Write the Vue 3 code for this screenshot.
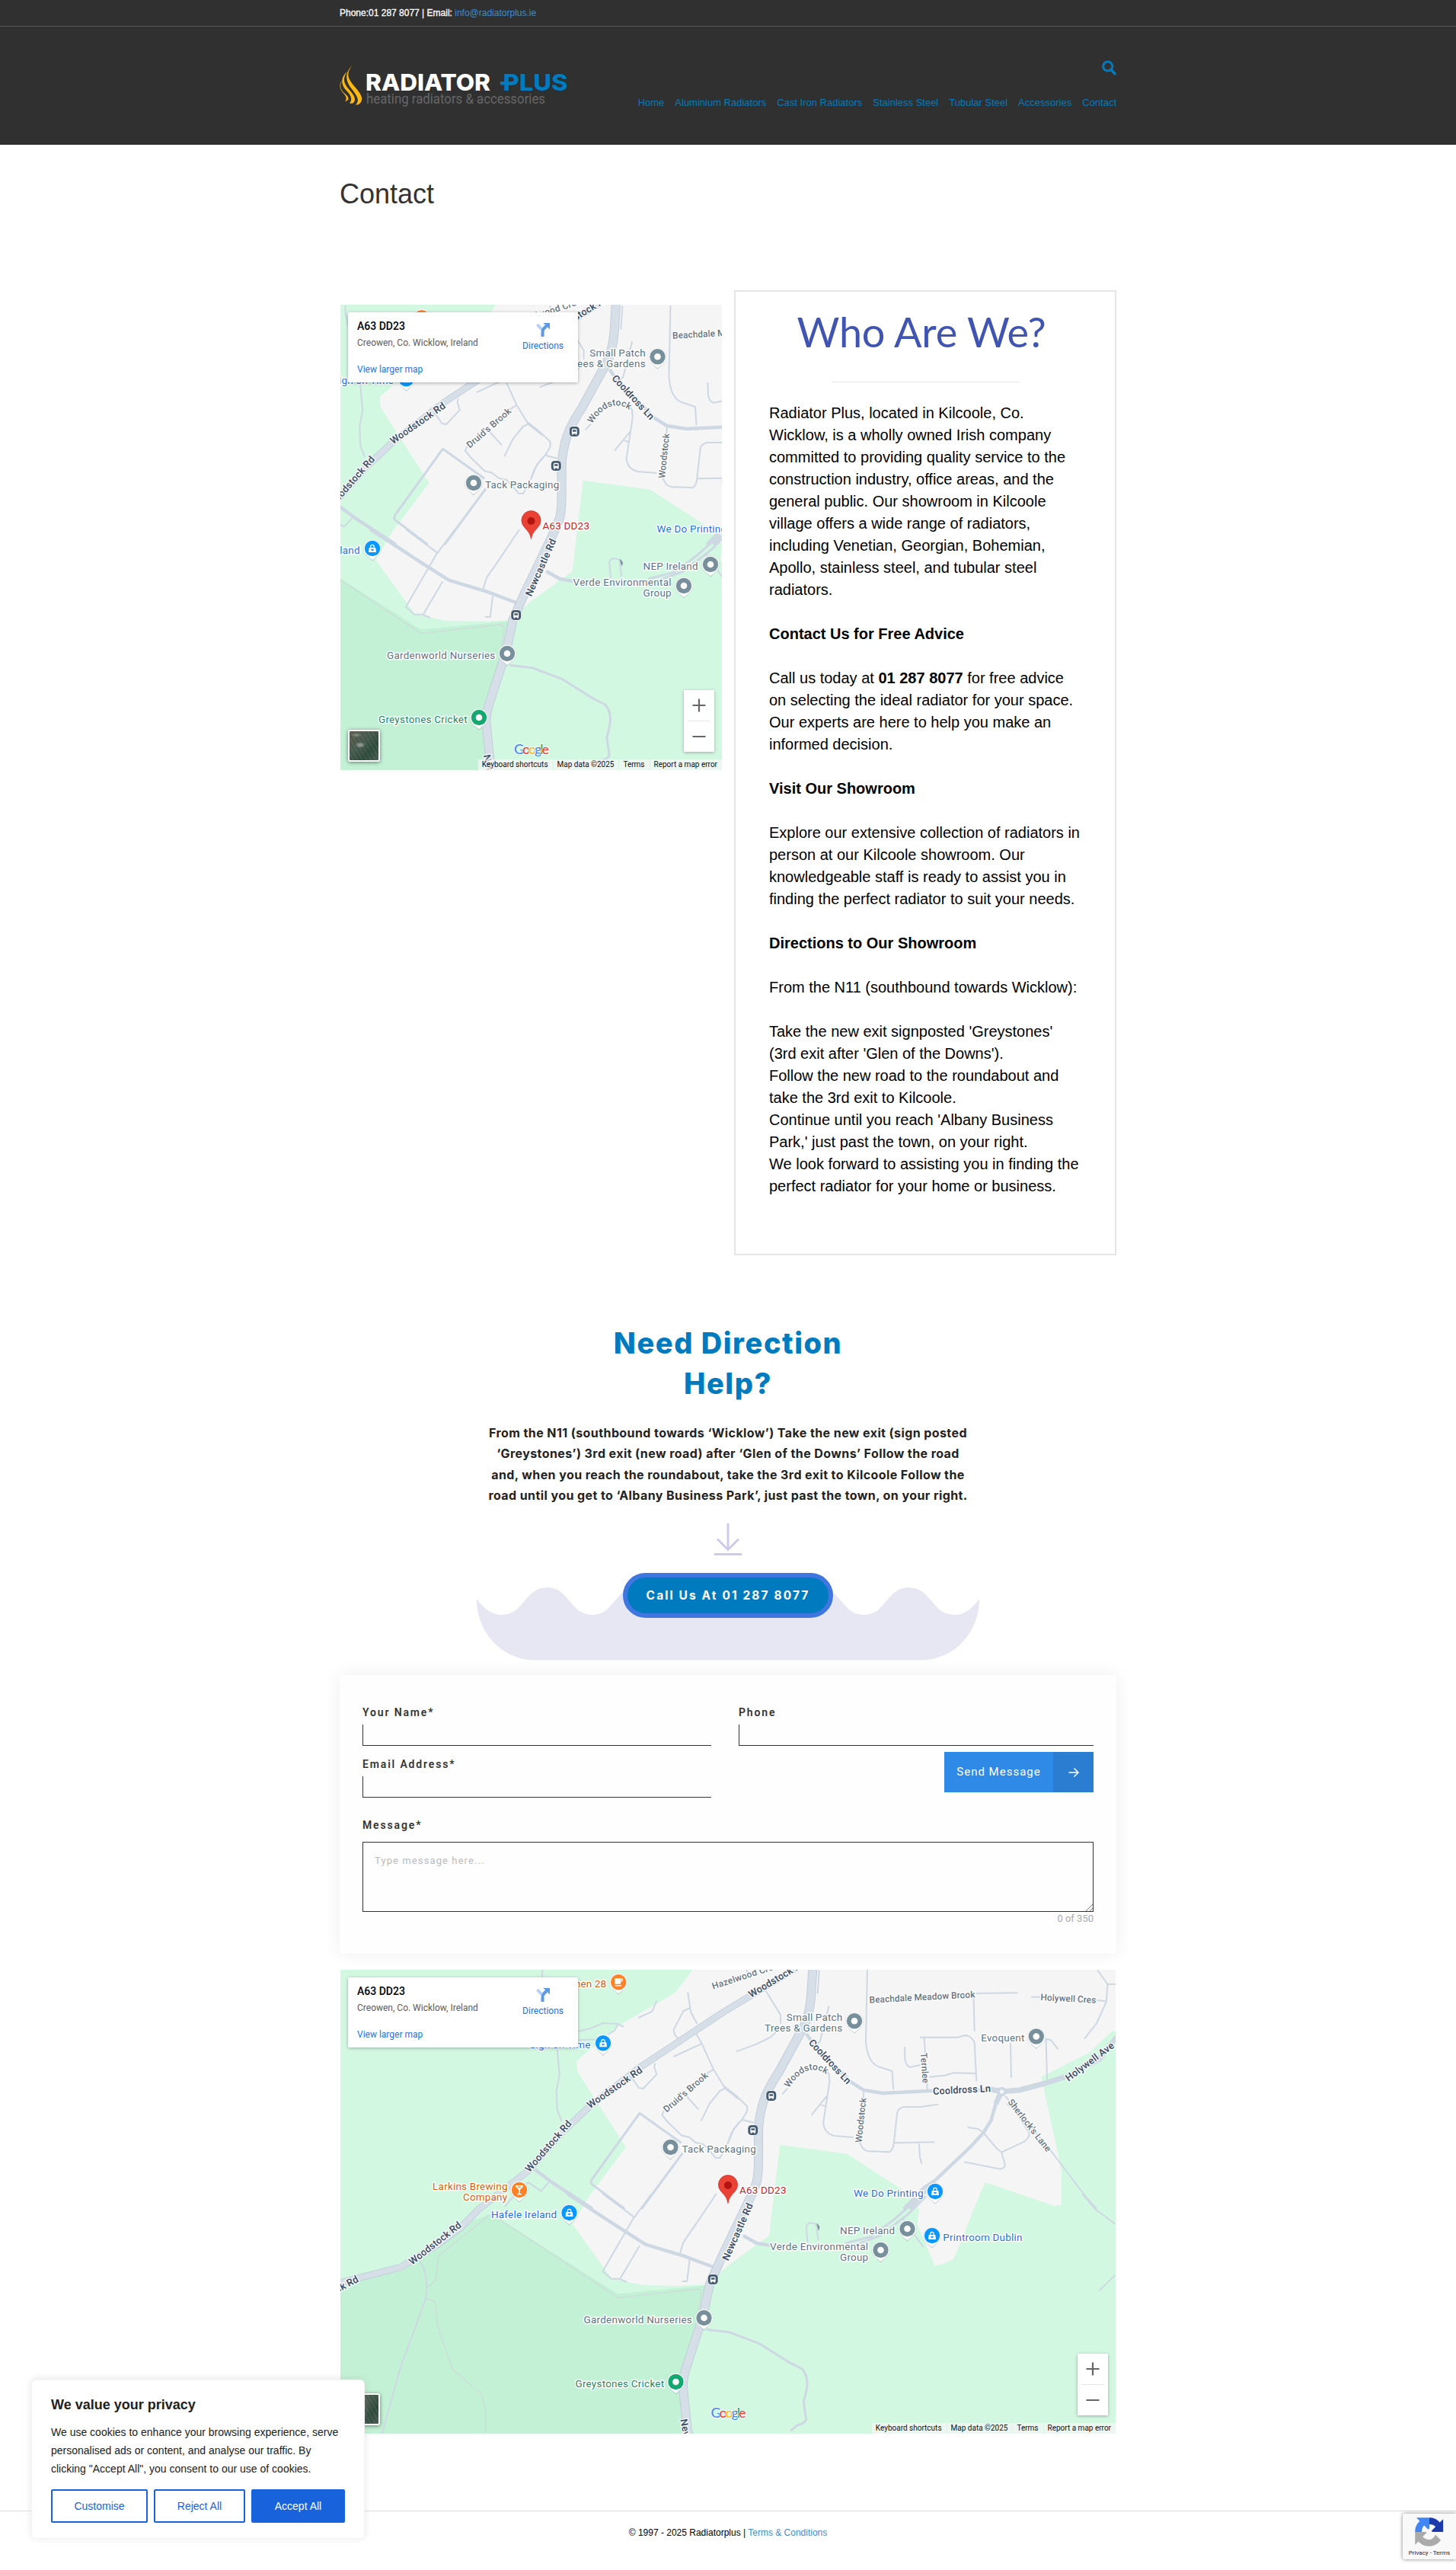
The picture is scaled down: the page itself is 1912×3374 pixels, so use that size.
<script setup>
const nav = ['Home', 'Aluminium Radiators', 'Cast Iron Radiators', 'Stainless Steel', 'Tubular Steel', 'Accessories', 'Contact']

// Map coordinates are pixels from the centre of the map view.
const places = [
  { t: 'Small Patch', x: 77.5, y: -237.5, w: 73.4, c: 'grey' },
  { t: 'Trees & Gardens', x: 48.8, y: -223.5, w: 102, c: 'grey' },
  { t: 'Tack Packaging', x: -59.8, y: -64.5, w: 97.3, c: 'grey' },
  { t: 'A63 DD23', x: 15.6, y: -10.5, w: 61.6, c: 'red' },
  { t: 'We Do Printing', x: 165.7, y: -6.5, w: 91.6, c: 'blue' },
  { t: 'Evoquent', x: 333, y: -210.5, w: 57, c: 'grey' },
  { t: 'NEP Ireland', x: 147.8, y: 42.5, w: 72, c: 'grey' },
  { t: 'Verde Environmental', x: 55.8, y: 63.5, w: 129, c: 'grey' },
  { t: 'Group', x: 147.8, y: 77.5, w: 37, c: 'grey' },
  { t: 'Gardenworld Nurseries', x: -188.8, y: 159.5, w: 142.3, c: 'grey' },
  { t: 'Greystones Cricket', x: -199.8, y: 243.5, w: 116.6, c: 'green' },
  { t: 'Hafele Ireland', x: -310.4, y: 21, w: 86.2, c: 'blue' },
  { t: 'Printroom Dublin', x: 283, y: 51, w: 104.2, c: 'blue' },
  { t: 'Larkins Brewing', x: -387.2, y: -15.5, w: 98.4, c: 'orange' },
  { t: 'Company', x: -347.3, y: -1.5, w: 58.1, c: 'orange' },
  { t: 'Kitchen 28', x: -224, y: -281.5, w: 64.7, c: 'orange' },
  { t: 'Sign on Time', x: -260, y: -201.5, w: 80, c: 'blue' },
]
const streets = [
  { t: 'Woodstock Rd', x: -149, y: -150, r: -35, w: 85, b: 1 },
  { t: 'Woodstock Rd', x: -236, y: -73, r: -49, w: 85, b: 1 },
  { t: 'Woodstock Rd', x: -384.7, y: 54.5, r: -38, w: 83, b: 1 },
  { t: 'Woodstock Rd', x: -523, y: 120, r: -28, w: 83, b: 1 },
  { t: 'Woodstock Rd', x: 64, y: -293, r: -31, w: 84, b: 1 },
  { t: 'Hazelwood Cres', x: 22, y: -297, r: -18, w: 90 },
  { t: 'Beachdale Meadow Brook', x: 255, y: -269, r: -3, w: 139 },
  { t: 'Holywell Cres', x: 447, y: -267, r: 3, w: 73 },
  { t: 'Cooldross Ln', x: 134, y: -184, r: 47, w: 75, b: 1 },
  { t: 'Cooldross Ln', x: 307, y: -147, r: -3, w: 76, b: 1 },
  { t: 'Holywell Ave', x: 475, y: -184, r: -37, w: 76, b: 1 },
  { t: 'Woodstock', x: 174, y: -107, r: -84, w: 59 },
  { t: 'Ternlee', x: 258.7, y: -175.5, r: 86, w: 40 },
  { t: "Sherlock's Lane", x: 396.3, y: -100.5, r: 52, w: 84 },
  { t: "Druid's Brook", x: -56, y: -144, r: -41, w: 73 },
  { t: 'Newcastle Rd', x: 12.5, y: 39.5, r: -66, w: 81, b: 1 },
  { t: 'Newcastle Rd', x: -50, y: 325, r: 78, w: 81, b: 1 },
]
const pins = [
  { x: 166, y: -237.3, k: 'grey' },
  { x: -75.5, y: -71.5, k: 'grey' },
  { x: 404.8, y: -217, k: 'grey' },
  { x: 235.5, y: 35.5, k: 'grey' },
  { x: 200.5, y: 63.5, k: 'grey' },
  { x: -31.5, y: 152.5, k: 'grey' },
  { x: -68.5, y: 236.5, k: 'green' },
  { x: -164, y: -208.2, k: 'blue' },
  { x: -208.5, y: 14.5, k: 'blue' },
  { x: 272, y: -13.5, k: 'blue' },
  { x: 268, y: 44.5, k: 'blue' },
  { x: -143.8, y: -288.3, k: 'cup' },
  { x: -274, y: -15.5, k: 'glass' },
]
const stops = [[56.8, -139], [32.8, -94], [-19.8, 102]]

const about = [
  { b: 0, t: 'Radiator Plus, located in Kilcoole, Co.\nWicklow, is a wholly owned Irish company\ncommitted to providing quality service to the\nconstruction industry, office areas, and the\ngeneral public. Our showroom in Kilcoole\nvillage offers a wide range of radiators,\nincluding Venetian, Georgian, Bohemian,\nApollo, stainless steel, and tubular steel\nradiators.' },
  { b: 1, t: 'Contact Us for Free Advice' },
  { call: 1 },
  { b: 1, t: 'Visit Our Showroom' },
  { b: 0, t: 'Explore our extensive collection of radiators in\nperson at our Kilcoole showroom. Our\nknowledgeable staff is ready to assist you in\nfinding the perfect radiator to suit your needs.' },
  { b: 1, t: 'Directions to Our Showroom' },
  { b: 0, t: 'From the N11 (southbound towards Wicklow):' },
  { b: 0, t: "Take the new exit signposted 'Greystones'\n(3rd exit after 'Glen of the Downs').\nFollow the new road to the roundabout and\ntake the 3rd exit to Kilcoole.\nContinue until you reach 'Albany Business\nPark,' just past the town, on your right.\nWe look forward to assisting you in finding the\nperfect radiator for your home or business." },
]
const attribution = ['Keyboard shortcuts', 'Map data ©2025', 'Terms', 'Report a map error']
</script>

<template>
  <div class="page">
    <header class="head">
      <div class="topbar"><div class="wrap"><span>Phone:01 287 8077 | Email: </span><a>info@radiatorplus.ie</a></div></div>
      <div class="wrap brandrow">
        <svg class="logo" width="304" height="60" viewBox="0 0 304 60">
          <g fill="#fdb913">
            <path d="M15.500 4C6 16 11 22 19 32C27 41 30 47 27 52C25 55 22 56 20 55.500C26 50 22 44 15 35C7 25 5 14 15.500 4Z" />
            <path d="M9 12C2 22 5 28 11 35C19 44 21 49 17 53C16 54 13.500 54 12 53.500C17 48 13 42 7 36C0 28 1 18 9 12Z" />
            <path d="M3 23C-2 30 0 36 6 41C12 46 12 49 6 51.500C10 46 6 43 2 38C-2 32-1 27 3 23Z" />
          </g>
          <text x="33" y="37" textLength="164" lengthAdjust="spacingAndGlyphs" class="l1">RADIATOR</text>
          <text x="213.500" y="37" textLength="85" lengthAdjust="spacingAndGlyphs" class="l2">PLUS</text>
          <rect x="210" y="25" width="18" height="4.500" fill="#007bbf" />
          <text x="34" y="53.500" textLength="235" lengthAdjust="spacingAndGlyphs" class="l3">heating radiators &amp; accessories</text>
        </svg>
        <div class="navside">
          <svg width="19" height="20" viewBox="0 0 19 20"><circle cx="7.700" cy="8" r="6.100" fill="none" stroke="#007bbf" stroke-width="3" /><path d="M12 12.500L17 17.800" stroke="#007bbf" stroke-width="3.600" stroke-linecap="round" /></svg>
          <nav><a v-for="n in nav" :key="n">{{ n }}</a></nav>
        </div>
      </div>
    </header>

    <main class="wrap">
      <h1>Contact</h1>

      <div class="cols">
        <div class="map small">
          <svg width="501" height="611" viewBox="-250.5 -305.5 501 611">
            <g id="kilcoole">
              <rect x="-510" y="-307" width="1022" height="616" fill="#d3f8e2" />
              <path fill="#c3f1d5" d="M-144.600 121L-310.400 16L-317 18L-357 33L-433 88L-512 112V309H-51L-61 234L-36 134L-28.600 110Z" />
              <path fill="#f5f5f5" d="M-44.400-307L-69.700-274L-140.700-233L-199-184.500L-197.500-170.500L-134-71.500L-182.500-7L-204 29.500L-152.500 101L-111 109.500L-71 110.500L-27.500 109L-1 84.500L54 44.500L61-15.500L68.300-74.800L156.400-62.800L227-17L251 9.500L248.600 29.500L271.800 84.500L283 81L296.300 75.500L331-10.500L337.800-25.500L428.400 5.500L438 4.500V-40.500L415-147L411.500-164L474-195.500L504.500-224H512V-307Z" />
              <g class="minor">
                <g transform="translate(-516 -320.5) scale(.33807 .33333)">
                  <path d="M805 48V78L862 355L872 460L860 525L863 600L880 645M945 290L990 280L1040 258L1100 261L1122 273M1100 261L1085 288L1060 303M945 325L1010 322M1178 237L1232 212L1249 170M1370 137L1382 215L1407 262M1378 198L1352 212L1315 285L1320 305L1335 322M1315 390L1422 340M1403 300L1425 340L1470 440L1515 515L1568 558M1470 440L1440 460M1150 470L1180 513L1197 516L1249 460L1240 430L1243 415M1278 603L1270 620L1290 645L1345 700L1375 707L1400 728L1430 735L1455 760L1478 789H1495L1520 745L1540 690L1568 650M1515 515L1495 525L1455 575L1422 643M1360 540L1412 598M660 980L680 955L750 885L800 920L835 880" />
                  <path class="m3" d="M1345 730L1183 613L1000 870Q990 885 998 893L1125 990M1350 770L1190 990" />
                  <path class="m5" d="M770 830L835 880L1000 990" />
                </g>
                <g transform="translate(-6 -320.5) scale(.33807 .33333)">
                  <path d="M92 48V60M163 128L222 225V260M50 370L130 340L180 315L215 285M372 50L366 142M410 190L385 290L375 330L360 345M0 505L45 540L92 585V605L72 638L40 675L18 730M72 638L118 650M228 538L250 515M395 440L410 460L412 490L388 650Q390 690 430 702L505 708M402 545L342 620M375 577L398 587M559 48L553 330Q560 420 610 432L655 447L660 520M545 530L540 600L520 710L535 740Q545 765 575 763L645 766Q660 755 662 730L675 610Q678 595 700 588H765L835 578M662 730L820 727M760 733L763 785L770 812M704 352L705 400Q710 430 728 431L765 423M763 314H910L940 306Q965 310 975 335L983 487M780 314L792 520M800 470L860 464L895 454L980 456M980 141L1143 139M972 160L975 290M1195 155H1230M1450 168L1485 172M1452 48L1492 105L1487 175L1450 258L1402 320M1492 105H1524M1115 335L1118 473M1253 320L1257 480M1253 320L1272 325L1300 361M1100 575L1130 600L1188 690Q1190 708 1170 724L1080 767L1060 750L1010 690M1080 767L1094 815Q1090 835 1070 832L935 805M948 668L990 675L1010 690M1095 545L1130 590L1275 765L1410 945L1450 990" />
                  <path class="m5" d="M322 300L350 340L495 490L545 522L620 534L800 525L1080 520M1078 530L1058 575L1040 640L1010 690L960 745L825 875" />
                  <path class="m4" d="M825 875L780 905L700 990M825 875L725 990" />
                  <path class="m7" d="M1035 518L1080 528L1150 522L1250 495L1340 465L1460 400L1530 310M1080 528L1058 575" />
                </g>
                <circle cx="359.500" cy="-144.500" r="4.500" fill="#f5f5f5" stroke-width="3.500" />
                <g transform="translate(-516 -10.5) scale(.66313 .33333)">
                  <path d="M530 0L592 92M627 0L590 100L530 305L547 335H562L578 348M565 333L603 205M755 0L718 110L690 190L683 235M702 262L697 345H687M936 193L933 130Q935 112 945 115L953 120L957 185M1125 100L1165 210M1480 0L1505 60L1545 120M1545 320L1513 382M168 265Q185 310 180 410L160 520L130 680L105 860L93 945" />
                  <path class="m5" d="M460 0L560 130L615 200L690 245L748 288M808 165L835 195L860 203L900 205" />
                  <path class="m3" d="M735 535L780 545L840 590L900 665L925 690Q938 720 934 770L928 820L933 890Q930 905 915 912L902 935M1010 195L1060 170L1105 105L1165 0M1025 205L1080 165L1135 80L1170 10" />
                  <path class="trail" d="M325 100L560 410L718 375Q728 380 724 400L720 460M305 85L205 245L200 340L182 370M180 412L198 425L203 520L232 690L290 790L298 850V945" />
                </g>
              </g>
              <path class="edge" d="M90-307L-6-249L-117-175.500L-183-124L-218.500-90.500L-262.500-40.500L-327 9.500L-350 33L-384 58L-430 86L-512 107" stroke-width="9" />
              <path class="road" d="M90-307L-6-249L-117-175.500L-183-124L-218.500-90.500L-262.500-40.500L-327 9.500L-350 33L-384 58L-430 86L-512 107" stroke-width="7.600" />
              <path class="edge" d="M111.500-308L109-269Q107-245 99-229L66-169Q48-142 44-122Q40-105 40-92V-52Q40-35 37.500-25.500L31-9L-7.500 71L-24 108L-31 141L-37.500 164.500L-55 218Q-60 235-59 244.500L-53.500 298L-51 309" stroke-width="12" />
              <path class="road" d="M111.500-308L109-269Q107-245 99-229L66-169Q48-142 44-122Q40-105 40-92V-52Q40-35 37.500-25.500L31-9L-7.500 71L-24 108L-31 141L-37.500 164.500L-55 218Q-60 235-59 244.500L-53.500 298L-51 309" stroke-width="10.400" />
              <path d="M117 29L120 33L119 37Z" fill="#78909c" stroke="#78909c" />

              <text v-for="(s, i) in streets" :key="'s' + i" :class="['street', { bold: s.b }]" :transform="`translate(${s.x} ${s.y}) rotate(${s.r})`" y="4.500" text-anchor="middle" :textLength="s.w">{{ s.t }}</text>
              <path id="bend" d="M80-149Q104-188 134-164L142-157" fill="none" />
              <text class="street" textLength="60"><textPath href="#bend">Woodstock</textPath></text>

              <g v-for="(b, i) in stops" :key="'b' + i" :transform="`translate(${b[0]} ${b[1]})`">
                <circle r="7.600" fill="#fff" /><rect x="-6.500" y="-6.500" width="13" height="13" rx="4.500" fill="#455a70" />
                <path d="M-3.500 3V-2Q-3.500-3.800-1.700-3.800H1.700Q3.500-3.800 3.500-2V3ZM-2.300-2.200V.2H2.300V-2.200ZM-3 3H-1.500V4.300H-3ZM1.500 3H3V4.300H1.500Z" fill="#fff" fill-rule="evenodd" />
              </g>
              <g v-for="(p, i) in pins" :key="'p' + i" :transform="`translate(${p.x} ${p.y})`">
                <path d="M0 16.500L-7.500 9.500A11.800 11.800 0 1 1 7.500 9.500Z" fill="#90a4ae" opacity=".55" />
                <path d="M0 15.300L-7.500 9A11.600 11.600 0 1 1 7.500 9Z" fill="#fff" />
                <circle r="10.200" :class="'pin-' + p.k" />
                <circle v-if="p.k === 'grey' || p.k === 'green'" r="4.300" fill="#fff" />
                <path v-else-if="p.k === 'blue'" d="M-4.300-1H-2.800V-2.500A2.800 2.800 0 0 1 2.800-2.500V-1H4.300L5 5H-5ZM-1.600-1H1.600V-2.500A1.600 1.600 0 0 0-1.600-2.500ZM-2 1A2 2 0 0 0 2 1Z" fill="#fff" fill-rule="evenodd" />
                <path v-else-if="p.k === 'cup'" d="M-5-5H5.500V-1H3V1Q3 2.500 1.500 2.500H-3.500Q-5 2.500-5 1ZM3-3.800V-2H4.300V-3.800ZM-5 4H4V5.300H-5Z" fill="#fff" fill-rule="evenodd" />
                <path v-else d="M-5-6H5V-4.500L.8 0V5H3V6.300H-3V5H-.8V0L-5-4.500ZM-2.500-4.500L-1.300-3H1.300L2.500-4.500Z" fill="#fff" fill-rule="evenodd" />
              </g>
              <text v-for="p in places" :key="p.t" :x="p.x - 0.7" :y="p.y" :textLength="p.w" :class="['place', 't-' + p.c]">{{ p.t }}</text>
              <path d="M0 2.200C-1.500-6-4.500-8-9-13.500A12.600 12.600 0 1 1 9-13.500C4.500-8 1.500-6 0 2.200Z" fill="#ea4335" stroke="#c5221f" stroke-width=".6" />
              <circle cy="-21.500" r="5" fill="#b31412" />
            </g>
            <text x="-22.500" y="284" textLength="46" class="google"><tspan fill="#4285f4">G</tspan><tspan fill="#ea4335">o</tspan><tspan fill="#fbbc04">o</tspan><tspan fill="#4285f4">g</tspan><tspan fill="#34a853">l</tspan><tspan fill="#ea4335">e</tspan></text>
          </svg>
          <div class="mcard">
            <div><b>A63 DD23</b><span>Creowen, Co. Wicklow, Ireland</span><a>View larger map</a></div>
            <div class="dir"><svg width="18" height="18" viewBox="0 0 18 18"><path d="M1.500 2L8.500 9.500" stroke="#b3d1f8" stroke-width="4" /><path d="M8.500 18V12Q8.500 9 10.500 7L14 3.500" fill="none" stroke="#5c9ae8" stroke-width="4" /><path d="M9.500 0H18V8.500Z" fill="#5c9ae8" /></svg><a>Directions</a></div>
          </div>
          <div class="zoomer"><svg width="40" height="81" viewBox="0 0 40 81"><path d="M11.500 20H28.500M20 11.500V28.500M11.500 61H28.500" stroke="#666" stroke-width="2.200" /><path d="M5 40.500H35" stroke="#e6e6e6" /></svg></div>
          <div class="thumb"></div>
          <div class="attr"><span v-for="a in attribution" :key="a">{{ a }}</span></div>
        </div>

        <section class="who">
          <h2>Who Are We?</h2>
          <hr />
          <template v-for="(p, i) in about" :key="i">
            <p v-if="p.call">Call us today at <b>01 287 8077</b> for free advice<br />on selecting the ideal radiator for your space.<br />Our experts are here to help you make an<br />informed decision.</p>
            <p v-else :class="{ strong: p.b }">{{ p.t }}</p>
          </template>
        </section>
      </div>

      <section class="help">
        <h2>Need Direction<br />Help?</h2>
        <p><span>From the N11 (southbound towards ‘Wicklow’) Take the new exit (sign posted</span><span>‘Greystones’) 3rd exit (new road) after ‘Glen of the Downs’ Follow the road</span><span>and, when you reach the roundabout, take the 3rd exit to Kilcoole Follow the</span><span>road until you get to ‘Albany Business Park’, just past the town, on your right.</span></p>
        <svg class="arrow" width="36" height="43" viewBox="0 0 36 43"><path d="M18 0V34M4 20.500L18 34.500L32 20.500" fill="none" stroke="#cdc9e8" stroke-width="2.800" /><path d="M0 40.500H36" stroke="#cdc9e8" stroke-width="3" /></svg>
        <div class="wave">
          <svg width="660" height="96" viewBox="0 0 660 96"><path fill="#e7e7f3" d="M0 15C10 28 19 36 33 36C62 36 63 0 92.500 0C122 0 122 36 152 36C181 36 181 0 211 0C240 0 240 36 270 36C300 36 300 0 330 0C360 0 360 36 390 36C420 36 420 0 449 0C479 0 479 36 508 36C538 36 538 0 567.500 0C597 0 598 36 627 36C641 36 650 28 660 15C660 60 626 95.500 583 95.500H77C34 95.500 0 60 0 15Z" /></svg>
          <a class="call">Call Us At 01 287 8077</a>
        </div>
      </section>

      <form class="form">
        <div class="row">
          <div class="f1"><label>Your Name*</label><div class="input"></div><label class="second">Email Address*</label><div class="input"></div></div>
          <div class="f2"><label>Phone</label><div class="input"></div>
            <div class="send"><span>Send Message</span><i><svg width="14" height="14" viewBox="0 0 14 14"><path d="M.5 7H13M7.500 1.500L13 7L7.500 12.500" fill="none" stroke="#fff" stroke-width="1.500" /></svg></i></div>
          </div>
        </div>
        <label class="msg">Message*</label>
        <div class="area">Type message here...<svg width="9" height="9" viewBox="0 0 9 9"><path d="M0 9L9 0M5 9L9 5" stroke="#666" stroke-width=".9" /></svg></div>
        <div class="count">0 of 350</div>
      </form>

      <div class="map wide">
        <svg width="1018" height="609" viewBox="-509 -304.5 1018 609">
          <use href="#kilcoole" />
          <text x="-22.500" y="283" textLength="46" class="google"><tspan fill="#4285f4">G</tspan><tspan fill="#ea4335">o</tspan><tspan fill="#fbbc04">o</tspan><tspan fill="#4285f4">g</tspan><tspan fill="#34a853">l</tspan><tspan fill="#ea4335">e</tspan></text>
        </svg>
        <div class="mcard">
          <div><b>A63 DD23</b><span>Creowen, Co. Wicklow, Ireland</span><a>View larger map</a></div>
          <div class="dir"><svg width="18" height="18" viewBox="0 0 18 18"><path d="M1.500 2L8.500 9.500" stroke="#b3d1f8" stroke-width="4" /><path d="M8.500 18V12Q8.500 9 10.500 7L14 3.500" fill="none" stroke="#5c9ae8" stroke-width="4" /><path d="M9.500 0H18V8.500Z" fill="#5c9ae8" /></svg><a>Directions</a></div>
        </div>
        <div class="zoomer"><svg width="40" height="81" viewBox="0 0 40 81"><path d="M11.500 20H28.500M20 11.500V28.500M11.500 61H28.500" stroke="#666" stroke-width="2.200" /><path d="M5 40.500H35" stroke="#e6e6e6" /></svg></div>
        <div class="thumb"></div>
        <div class="attr"><span v-for="a in attribution" :key="a">{{ a }}</span></div>
      </div>
    </main>

    <footer>© 1997 - 2025 Radiatorplus | <a>Terms &amp; Conditions</a></footer>

    <div class="cookie">
      <h3>We value your privacy</h3>
      <p>We use cookies to enhance your browsing experience, serve personalised ads or content, and analyse our traffic. By clicking "Accept All", you consent to our use of cookies.</p>
      <div class="btns"><span class="b1">Customise</span><span class="b2">Reject All</span><span class="b3">Accept All</span></div>
    </div>

    <div class="captcha">
      <svg width="40" height="40" viewBox="0 0 64 64">
        <path fill="#1c3aa9" d="M61 31.900V5L54 12C48 5 40 2 32 2V16C38 16 42 18 45 21L37 29C37 31 38 31.900 39 31.900Z" />
        <path fill="#4285f4" d="M32 2H5L12 9.500C5 15 2 23 2 31.900H16C16 26 18 21 21 18.500L29 26.500C31 26.500 32 25.500 32 24Z" />
        <path fill="#ababab" d="M2 31.900V59L9 52C15 59 23 62 31.500 62C42 62 50 57 56 49L45 38C41 45 37 48 31.500 48C25 48 21 45 18 42L26 34C26 32.500 25 31.900 24 31.900Z" />
      </svg>
      <span>Privacy - Terms</span>
    </div>
  </div>
</template>

<style>
body { margin: 0; background: #fff; }
</style>

<style scoped>
.page { position: relative; height: 3374px; overflow: hidden; font-family: "Liberation Sans", Arial, sans-serif; color: #000; }
.wrap { width: 1020px; margin: 0 auto; }
.head { height: 190px; background: #303030; box-sizing: border-box; border-bottom: 1px solid #222; }
.topbar { height: 34px; border-bottom: 1px solid #555; color: #fff; font-size: 12px; line-height: 35px; }
.topbar span { -webkit-text-stroke: .3px #fff; white-space: pre; }
.topbar a { color: #428bca; }
.brandrow { display: flex; justify-content: space-between; }
.logo { margin-top: 47px; margin-left: 1px; overflow: visible; }
.l1, .l2 { font: 800 30px Inter, sans-serif; fill: #fff; }
.l2 { fill: #007bbf; paint-order: stroke; stroke: #1c2b33; stroke-width: 1.5px; }
.l3 { font: 400 17.500px Roboto, sans-serif; fill: #676767; }
.navside { display: flex; flex-direction: column; align-items: flex-end; padding-top: 44px; }
nav { display: flex; gap: 14px; margin-top: 28px; font-size: 13px; line-height: 15px; color: #007bbf; }
h1 { margin: 45px 0 0; font-size: 36px; line-height: 40px; font-weight: 400; color: #333; }
.cols { display: flex; justify-content: space-between; align-items: flex-start; margin-top: 106px; }
.map { position: relative; overflow: hidden; font-family: Roboto, sans-serif; margin-left: 1px; }
.map > svg { display: block; }
.small { width: 501px; height: 611px; margin-top: 19px; }
.wide { width: 1018px; height: 609px; margin-top: 21px; }
.minor { fill: none; stroke: #cdd8e3; stroke-linejoin: round; }
.minor path { stroke-width: 2px; vector-effect: non-scaling-stroke; }
.minor .m3 { stroke-width: 3px; }
.minor .m4 { stroke-width: 4px; }
.minor .m5 { stroke-width: 4.500px; }
.minor .m7 { stroke-width: 7px; }
.minor .trail { stroke: #cddcd8; stroke-width: 1.300px; }
.edge { fill: none; stroke: #bcc8d6; stroke-linejoin: round; }
.road { fill: none; stroke: #d6dfe8; stroke-linejoin: round; }
.street { font: 500 12px Roboto, sans-serif; fill: #66727e; paint-order: stroke; stroke: #fff; stroke-width: 2.500px; stroke-linejoin: round; }
.street.bold { font-size: 13px; fill: #40506a; font-weight: 600; }
.place { font: 400 13.500px Roboto, sans-serif; paint-order: stroke; stroke: #fff; stroke-width: 3px; stroke-linejoin: round; }
.t-grey { fill: #5b7383; }
.t-red { fill: #c5221f; }
.t-blue { fill: #1a73e8; }
.t-green { fill: #188a5f; }
.t-orange { fill: #d65f0b; }
.pin-grey { fill: #78909c; }
.pin-green { fill: #14a870; }
.pin-blue { fill: #0a98ff; }
.pin-cup, .pin-glass { fill: #ff8126; }
.google { font: 500 18px Lato, sans-serif; paint-order: stroke; stroke: #fff; stroke-width: 1.500px; }
.mcard { position: absolute; left: 10px; top: 10px; width: 302px; height: 92px; box-sizing: border-box; padding: 9px 19px 0 12px; background: #fff; border-radius: 2px; box-shadow: 0 1px 4px rgba(0, 0, 0, .3); display: flex; justify-content: space-between; font-size: 12px; }
.mcard b { display: block; font-size: 14px; font-weight: 500; line-height: 19px; }
.mcard span { display: block; color: #5b5b5b; line-height: 16px; margin-top: 4px; }
.mcard a { display: block; color: #1a73e8; line-height: 16px; margin-top: 19px; }
.mcard .dir { text-align: center; padding-top: 5px; }
.mcard .dir svg { display: block; margin: 0 auto; }
.mcard .dir a { margin-top: 4px; }
.zoomer { position: absolute; right: 10px; bottom: 24px; width: 40px; height: 81px; background: #fff; box-shadow: 0 1px 4px rgba(0, 0, 0, .3); }
.thumb { position: absolute; left: 10px; bottom: 11px; width: 38px; height: 38px; border: 2px solid #fff; border-radius: 3px; box-shadow: 0 1px 5px rgba(0, 0, 0, .5); background: radial-gradient(ellipse 7px 4px at 14px 18px, #8d978f 30%, transparent), radial-gradient(ellipse 7px 3px at 9px 5px, #87928a, transparent), repeating-linear-gradient(60deg, transparent 0 4px, rgba(120, 135, 125, .3) 4px 5px), linear-gradient(135deg, #5d5c4f, #44584c 45%, #2c4a3a 70%, #4a5b55); }
.attr { position: absolute; right: 0; bottom: 0; display: flex; gap: 1px; font-size: 10px; line-height: 14px; color: #111; }
.attr span { background: rgba(245, 245, 245, .75); padding: 0 6px 0 5px; }
.who { box-sizing: border-box; width: 502px; height: 1267px; border: 2px solid #e5e5e5; padding: 0 0 0 44px; }
.who h2 { margin: 21px 54px 0 0; text-align: center; font: 400 54px/64px Lato, sans-serif; color: #4054b2; letter-spacing: -.2px; white-space: nowrap; }
.who hr { border: 0; height: 1px; background: #e5e5e5; width: 246px; margin: 33px 0 26px 82px; }
.who p { margin: 0 0 29px; font-size: 20px; line-height: 29px; white-space: pre; }
.who .strong { font-weight: 700; }
.help { display: flex; flex-direction: column; align-items: center; margin-top: 89px; }
.help h2 { margin: 0; font: 800 38px/53px Inter, sans-serif; color: #007bbf; text-align: center; letter-spacing: 1.550px; }
.help p { margin: 25px 0 0; font: 700 16px/27.400px Inter, sans-serif; color: #222; text-align: center; letter-spacing: .41px; }
.help p span { display: block; white-space: nowrap; }
.arrow { display: block; margin-top: 22.400px; }
.wave { position: relative; width: 660px; height: 114px; margin-top: 22px; }
.wave svg { display: block; padding-top: 19px; }
.call { position: absolute; left: 192px; top: 0; width: 276px; height: 59px; box-sizing: border-box; border: 6px solid #3f76e0; border-radius: 30px; background: #007bbf; color: #fff; text-align: center; font: 700 15.500px/47px Inter, sans-serif; letter-spacing: 2.100px; white-space: nowrap; }
.form { height: 366px; box-sizing: border-box; margin-top: 20px; padding: 36px 30px 0; box-shadow: 0 0 22px rgba(0, 0, 0, .07); background: #fefefe; font-family: Roboto, sans-serif; font-size: 13px; }
.row { display: flex; justify-content: space-between; }
.f1 { width: 458px; }
.f2 { width: 466px; }
label { display: block; font-size: 14px; font-weight: 600; letter-spacing: 1.850px; line-height: 27px; padding-bottom: 2px; color: #333; }
.second { margin-top: 11px; }
.input { height: 27px; border-left: 1px solid #333; border-bottom: 1px solid #333; }
.send { display: flex; width: 196px; height: 53px; margin: 8px 0 0 auto; background: #2e8ae6; color: #fff; font-size: 15px; font-weight: 400; letter-spacing: 1px; line-height: 52px; }
.send span { flex: 1; text-align: center; }
.send i { width: 53px; background: #2a7dd1; display: flex; align-items: center; justify-content: center; }
.msg { margin-top: 23px; }
.area { position: relative; box-sizing: border-box; height: 92px; margin-top: 6px; border: 1px solid #333; padding: 15px; line-height: 18px; letter-spacing: 1.100px; color: #bbb; }
.area svg { position: absolute; right: 0; bottom: 0; }
.count { text-align: right; color: #aaa; font-size: 13px; line-height: 18px; }
footer { box-sizing: border-box; height: 78px; margin-top: 101px; border-top: 1px solid #ddd; text-align: center; font-size: 12px; line-height: 56px; }
footer a { color: #428bca; }
.cookie { position: absolute; left: 41px; top: 3124px; width: 438px; height: 209px; box-sizing: border-box; padding: 22px 25px; background: #fff; border: 1px solid #f4f4f4; border-radius: 6px; box-shadow: 0 -1px 10px rgba(172, 171, 171, .3); color: #212121; }
.cookie h3 { margin: 0; font-size: 18px; line-height: 20px; }
.cookie p { margin: 14px -5px 0 0; font-size: 14px; line-height: 24px; }
.btns { display: flex; gap: 8px; margin-top: 15px; font-size: 14px; }
.btns span { box-sizing: border-box; height: 44px; border: 2px solid #1863dc; border-radius: 2px; color: #1863dc; text-align: center; line-height: 40px; }
.btns .b1 { width: 127px; }
.btns .b2 { width: 120px; }
.btns .b3 { width: 123px; background: #1863dc; color: #fff; }
.captcha { position: absolute; right: 0; top: 3300px; width: 70px; height: 60px; border-radius: 3px 0 0 3px; background: #f9f9f9; box-shadow: 0 0 5px gray; display: flex; flex-direction: column; align-items: center; font: 400 8px/10px Roboto, sans-serif; color: #222; }
.captcha svg { margin-top: 4px; }
.captcha span { margin-top: 3px; white-space: nowrap; }
</style>
